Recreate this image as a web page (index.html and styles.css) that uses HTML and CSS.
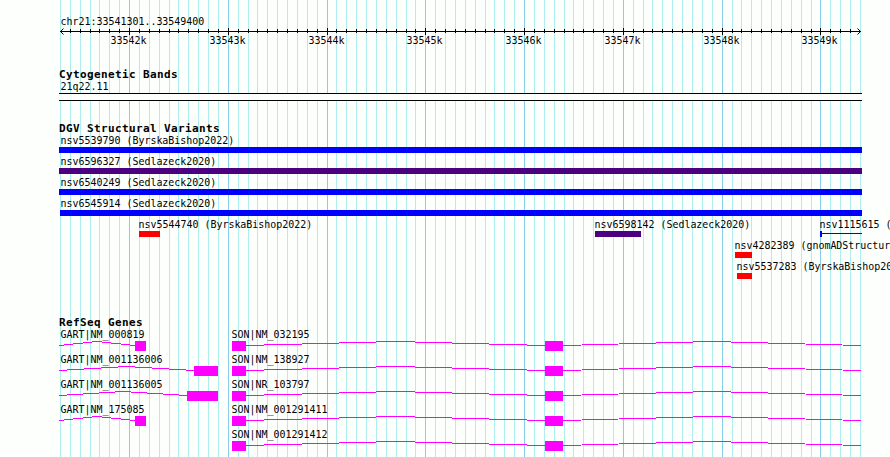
FILE: index.html
```html
<!DOCTYPE html>
<html lang="en">
<head>
    <meta charset="UTF-8">
    <title>chr21:33541301..33549400</title>
    <link rel="stylesheet" href="styles.css">
</head>
<body>
    <div class="browser">
        <!-- Grid lines behind the tracks -->
        <svg id="grid" class="grid" width="890" height="457"></svg>

        <main class="tracks">
            <!-- Ruler -->
            <svg id="ruler" class="ruler" width="890" height="67">
                <text x="60.5" y="25">chr21:33541301..33549400</text>
                <path class="axis" d="M60 31.5H861"/>
                <path class="arrow" d="M63.5 28.5L60.5 31.5L63.5 34.5M857.5 28.5L860.5 31.5L857.5 34.5"/>
            </svg>

            <!-- Cytogenetic bands -->
            <h2>Cytogenetic Bands</h2>
            <svg width="890" height="40">
                <text x="60.5" y="9">21q22.11</text>
                <rect class="band" x="59" y="12" width="803" height="8"/>
                <rect x="59" y="12" width="803" height="1"/>
                <rect x="59" y="19" width="803" height="1"/>
            </svg>

            <!-- Structural variants -->
            <h2>DGV Structural Variants</h2>
            <svg width="890" height="180">
                <text x="60.5" y="9">nsv5539790 (ByrskaBishop2022)</text>
                <rect class="gain" x="59" y="12" width="803" height="6"/>
                <text x="60.5" y="30">nsv6596327 (Sedlazeck2020)</text>
                <rect class="complex" x="59" y="33" width="803" height="6"/>
                <text x="60.5" y="51">nsv6540249 (Sedlazeck2020)</text>
                <rect class="gain" x="59" y="54" width="803" height="6"/>
                <text x="60.5" y="72">nsv6545914 (Sedlazeck2020)</text>
                <rect class="gain" x="60" y="75" width="802" height="6"/>

                <text x="138.5" y="93">nsv5544740 (ByrskaBishop2022)</text>
                <rect class="loss" x="139" y="96" width="21" height="6"/>
                <text x="594.5" y="93">nsv6598142 (Sedlazeck2020)</text>
                <rect class="complex" x="595" y="96" width="46" height="6"/>
                <text x="819.5" y="93">nsv1115615 (</text>
                <rect class="gain" x="820" y="96" width="2" height="6"/>
                <rect class="gain" x="822" y="98" width="40" height="1"/>

                <text x="734.5" y="114">nsv4282389 (gnomADStructur</text>
                <rect class="loss" x="735" y="117" width="17" height="6"/>
                <text x="736.5" y="135">nsv5537283 (ByrskaBishop20</text>
                <rect class="loss" x="737" y="138" width="15" height="6"/>
            </svg>

            <!-- Genes -->
            <h2>RefSeq Genes</h2>
            <svg width="890" height="128">
                <defs>
                    <g id="gartShort">
                        <polyline class="intron" points="59,16.5 97,12.5 135,16.5"/>
                        <rect class="exon" x="135" y="12" width="11" height="10"/>
                    </g>
                    <g id="son">
                        <rect class="exon" x="232" y="12" width="14" height="10"/>
                        <polyline class="intron" points="246,16.5 395.5,12.5 545,16.5"/>
                        <rect class="exon" x="545" y="12" width="18" height="10"/>
                        <polyline class="intron" points="563,16.5 712,12.5 861,16.5"/>
                    </g>
                </defs>
                <g>
                    <text x="60.5" y="9">GART|NM_000819</text>
                    <use href="#gartShort"/>
                    <text x="231.5" y="9">SON|NM_032195</text>
                    <use href="#son"/>
                </g>
                <g transform="translate(0 25)">
                    <text x="60.5" y="9">GART|NM_001136006</text>
                    <polyline class="intron" points="59,16.5 126.5,12.5 194,16.5"/>
                    <rect class="exon" x="194" y="12" width="24" height="10"/>
                    <text x="231.5" y="9">SON|NM_138927</text>
                    <use href="#son"/>
                </g>
                <g transform="translate(0 50)">
                    <text x="60.5" y="9">GART|NM_001136005</text>
                    <polyline class="intron" points="59,16.5 123,12.5 187,16.5"/>
                    <rect class="exon" x="187" y="12" width="31" height="10"/>
                    <text x="231.5" y="9">SON|NR_103797</text>
                    <use href="#son"/>
                </g>
                <g transform="translate(0 75)">
                    <text x="60.5" y="9">GART|NM_175085</text>
                    <use href="#gartShort"/>
                    <text x="231.5" y="9">SON|NM_001291411</text>
                    <use href="#son"/>
                </g>
                <g transform="translate(0 100)">
                    <text x="231.5" y="9">SON|NM_001291412</text>
                    <use href="#son"/>
                </g>
            </svg>
        </main>
    </div>

    <script>
        const SVG_NS = 'http://www.w3.org/2000/svg';
        const grid = document.getElementById('grid');
        const ruler = document.getElementById('ruler');

        function addRect(parent, x, y, height, className) {
            const rect = document.createElementNS(SVG_NS, 'rect');
            rect.setAttribute('x', x);
            rect.setAttribute('y', y);
            rect.setAttribute('width', 1);
            rect.setAttribute('height', height);
            rect.setAttribute('class', className);
            parent.appendChild(rect);
        }

        // One line every 100 bp, a major one every 1 kb
        for (let i = 0; i <= 81; i++) {
            const x = Math.floor(60.4 + i * 800 / 81);
            const major = i % 10 === 7;

            addRect(grid, x, 0, 457, major ? 'major' : 'minor');

            if (i > 0 && i < 81) {
                addRect(ruler, x, major ? 28 : 29, major ? 7 : 4, 'tick');
            }
            if (major) {
                const label = document.createElementNS(SVG_NS, 'text');
                label.setAttribute('x', x - 18.5);
                label.setAttribute('y', 44);
                label.textContent = (33542 + (i - 7) / 10) + 'k';
                ruler.appendChild(label);
            }
        }
    </script>
</body>
</html>
```

FILE: styles.css
```css
body {
    margin: 0;
    background: #fdfffc;
    color: #000;
    font-family: "DejaVu Sans Mono", monospace;
    font-size: 10px;
    overflow: hidden;
}

.browser {
    display: grid;
    width: 890px;
    height: 457px;
}

.grid,
.tracks {
    grid-area: 1 / 1;
}

.tracks {
    display: flex;
    flex-direction: column;
}

svg {
    display: block;
    flex: none;
    shape-rendering: crispEdges;
}

h2 {
    flex: none;
    height: 14px;
    margin: 0;
    padding-left: 59px;
    font-size: 11px;
    line-height: 16px;
    letter-spacing: 0.378px;
}

text {
    font-size: 9.966px;
    white-space: pre;
}

.minor {
    fill: #afeeee;
}

.major {
    fill: #87ceeb;
}

.axis,
.arrow {
    fill: none;
    stroke: #000;
}

.arrow {
    shape-rendering: auto;
}

.band {
    fill: #fdfffc;
}

.gain {
    fill: #0000ff;
}

.loss {
    fill: #ff0000;
}

.complex {
    fill: #4b0082;
}

.exon {
    fill: #ff00ff;
}

.intron {
    fill: none;
    stroke: #ff00ff;
}
```
